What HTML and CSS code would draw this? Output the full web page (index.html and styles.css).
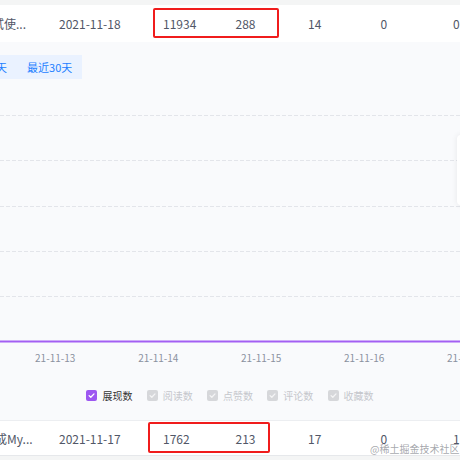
FILE: index.html
```html
<!DOCTYPE html>
<html lang="zh">
<head>
<meta charset="utf-8">
<title>数据</title>
<link rel="stylesheet" href="styles.css">
</head>
<body>
<div class="page">
  <div class="band-top"></div>
  <div class="row">
    <div class="cell title"><span class="clip clip-a">试使...</span></div>
    <div class="cell">2021-11-18</div>
    <div class="cell">11934</div>
    <div class="cell">288</div>
    <div class="cell">14</div>
    <div class="cell">0</div>
    <div class="cell">0</div>
  </div>
  <section class="chart">
    <div class="tabs">
      <span class="tab">最近7天</span>
      <span class="tab">最近30天</span>
    </div>
    <svg class="plot" width="460" height="291" viewBox="0 0 460 291">
      <g class="grid">
        <line x1="0" y1="36.5" x2="460" y2="36.5"/>
        <line x1="0" y1="81.5" x2="460" y2="81.5"/>
        <line x1="0" y1="127.5" x2="460" y2="127.5"/>
        <line x1="0" y1="172.5" x2="460" y2="172.5"/>
        <line x1="0" y1="217.5" x2="460" y2="217.5"/>
      </g>
      <line class="series" x1="0" y1="262.5" x2="460" y2="262.5"/>
      <g class="axis">
        <text x="55.2" y="282.6">21-11-13</text>
        <text x="158.3" y="282.6">21-11-14</text>
        <text x="261.2" y="282.6">21-11-15</text>
        <text x="364.2" y="282.6">21-11-16</text>
        <text x="467.2" y="282.6">21-11-17</text>
      </g>
    </svg>
    <div class="legend">
      <span class="item on"><svg class="box" width="11" height="11" viewBox="0 0 11 11"><rect width="11" height="11" rx="2"/><path d="M3.1 5.6 L4.8 7.3 L8 3.9"/></svg>展现数</span>
      <span class="item"><svg class="box" width="11" height="11" viewBox="0 0 11 11"><rect width="11" height="11" rx="2"/><path d="M3.1 5.6 L4.8 7.3 L8 3.9"/></svg>阅读数</span>
      <span class="item"><svg class="box" width="11" height="11" viewBox="0 0 11 11"><rect width="11" height="11" rx="2"/><path d="M3.1 5.6 L4.8 7.3 L8 3.9"/></svg>点赞数</span>
      <span class="item"><svg class="box" width="11" height="11" viewBox="0 0 11 11"><rect width="11" height="11" rx="2"/><path d="M3.1 5.6 L4.8 7.3 L8 3.9"/></svg>评论数</span>
      <span class="item"><svg class="box" width="11" height="11" viewBox="0 0 11 11"><rect width="11" height="11" rx="2"/><path d="M3.1 5.6 L4.8 7.3 L8 3.9"/></svg>收藏数</span>
    </div>
    <div class="card-edge"></div>
  </section>
  <div class="row row-bottom">
    <div class="cell title"><span class="clip clip-b">成My...</span></div>
    <div class="cell">2021-11-17</div>
    <div class="cell">1762</div>
    <div class="cell">213</div>
    <div class="cell">17</div>
    <div class="cell">0</div>
    <div class="cell">1</div>
  </div>
  <div class="band-bottom"></div>
  <div class="mark mark-top"></div>
  <div class="mark mark-bottom"></div>
  <div class="watermark">@稀土掘金技术社区</div>
</div>
</body>
</html>
```
FILE: styles.css
```css
* { box-sizing: border-box; }
html, body {
  margin: 0;
  padding: 0;
  width: 460px;
  height: 460px;
  overflow: hidden;
  background: #f4f5f5;
}
.page {
  position: relative;
  width: 460px;
  height: 460px;
  overflow: hidden;
  display: flex;
  flex-direction: column;
  font-family: "Noto Sans CJK SC", "Noto Sans", sans-serif;
}
.band-top {
  height: 5px;
  background: #f4f5f5;
  flex: none;
}
.row {
  flex: none;
  height: 37px;
  background: #fff;
  display: grid;
  grid-template-columns: 59px 104px repeat(5, 72.5px);
  align-items: center;
  font-size: 12px;
  color: #515767;
  white-space: nowrap;
}
.cell { overflow: visible; }
.title { overflow: hidden; }
.clip { display: inline-block; }
.clip-a { margin-left: -8px; }
.clip-b { margin-left: -5px; }
.chart {
  position: relative;
  flex: none;
  height: 378px;
  background: #f9fafc;
  display: flex;
  flex-direction: column;
}
.tabs {
  margin-top: 13px;
  margin-left: -42px;
  height: 24px;
  align-self: flex-start;
  display: flex;
  align-items: center;
  background: #eaf2ff;
  font-size: 11px;
  color: #1e80ff;
}
.tab { padding: 0 10px; line-height: 24px; }
.plot { display: block; flex: none; }
.grid line {
  stroke: #e3e5ea;
  stroke-width: 1;
  stroke-dasharray: 4 2;
}
.series {
  stroke: #a35ff3;
  stroke-width: 2;
}
.axis text {
  font-family: "Noto Sans CJK SC", "Noto Sans", sans-serif;
  font-size: 10px;
  fill: #8a919f;
  text-anchor: middle;
}
.legend {
  flex: none;
  height: 50px;
  display: flex;
  justify-content: center;
  align-items: center;
  gap: 14.3px;
  font-size: 10px;
  color: #c5c7cc;
}
.item {
  display: flex;
  align-items: center;
  gap: 5px;
  width: 46px;
  white-space: nowrap;
}
.box { display: block; flex: none; }
.box rect { fill: #d6d7da; }
.box path {
  fill: none;
  stroke: #f4f4f5;
  stroke-width: 1.3;
  stroke-linecap: round;
  stroke-linejoin: round;
}
.item.on { color: #333; }
.item.on .box rect { fill: #9d57f1; }
.item.on .box path { stroke: #fff; }
.card-edge {
  position: absolute;
  left: 457px;
  top: 93px;
  width: 60px;
  height: 70px;
  background: #fff;
  border-radius: 4px;
  box-shadow: 0 0 6px rgba(0, 0, 0, 0.08);
}
.row-bottom {
  height: 36px;
  border-top: 1px solid #eceef1;
  border-bottom: 1px solid #e6e8eb;
}
.band-bottom {
  flex: 1;
  background: #f4f5f5;
}
.mark {
  position: absolute;
  border: 2px solid #f01c1c;
  border-radius: 2px;
}
.mark-top {
  left: 153px;
  top: 8px;
  width: 126px;
  height: 30px;
}
.mark-bottom {
  left: 148px;
  top: 422px;
  width: 122px;
  height: 31px;
}
.watermark {
  position: absolute;
  left: 370px;
  top: 442px;
  font-size: 10px;
  line-height: 14px;
  color: rgba(150, 152, 158, 0.85);
  white-space: nowrap;
}
```
